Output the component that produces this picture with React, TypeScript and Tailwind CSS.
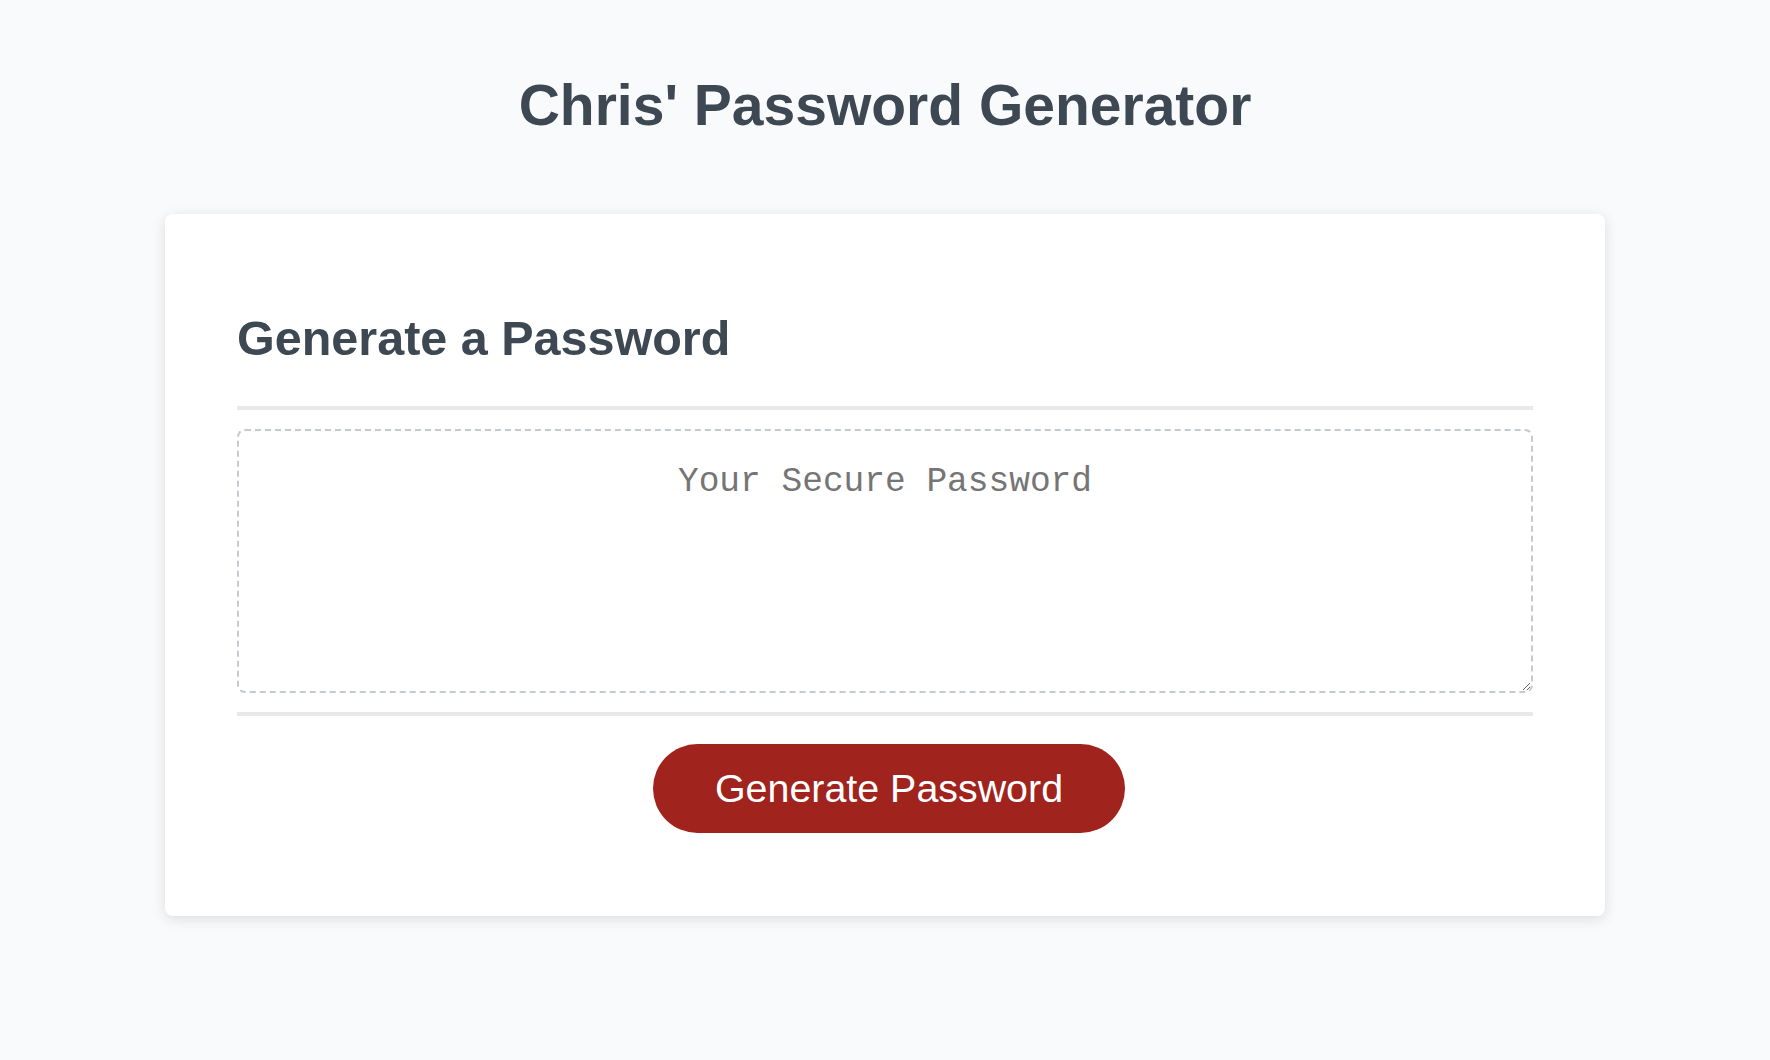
import React from "react";

export default function App() {
  return (
    <div className="min-h-[1060px] bg-[#f9fafb] pt-[72px] font-['Liberation_Sans',Arial,sans-serif]">
      <h1 className="text-center text-[57px] leading-[66px] font-bold text-[#3d4852]">
        Chris' Password Generator
      </h1>
      <div className="mx-auto mt-[76px] w-[1440px] rounded-[8px] bg-white px-[72px] pt-[96px] pb-[83px] shadow-[0_3px_14px_rgba(0,0,0,0.12)]">
        <h2 className="text-[48.5px] leading-[56px] font-bold text-[#3d4852]">
          Generate a Password
        </h2>
        <div className="mt-[40px] h-[4px] bg-[#e8e8e8]" />
        <div className="mt-[19px]">
          <textarea
            readOnly
            placeholder="Your Secure Password"
            className="block h-[264px] w-full rounded-[8px] border-2 border-dashed border-[#c5c9d0] bg-white px-4 pt-[31px] text-center font-['Liberation_Mono','Courier_New',monospace] text-[34.5px] leading-[40px] text-[#757575] outline-none placeholder:text-[#757575]"
          />
        </div>
        <div className="mt-[19px] h-[4px] bg-[#e8e8e8]" />
        <div className="mt-[28px] flex justify-center pl-[8px]">
          <button className="h-[89px] rounded-full bg-[#a0231d] px-[62px] text-[39.4px] leading-[45px] text-white">
            Generate Password
          </button>
        </div>
      </div>
    </div>
  );
}
